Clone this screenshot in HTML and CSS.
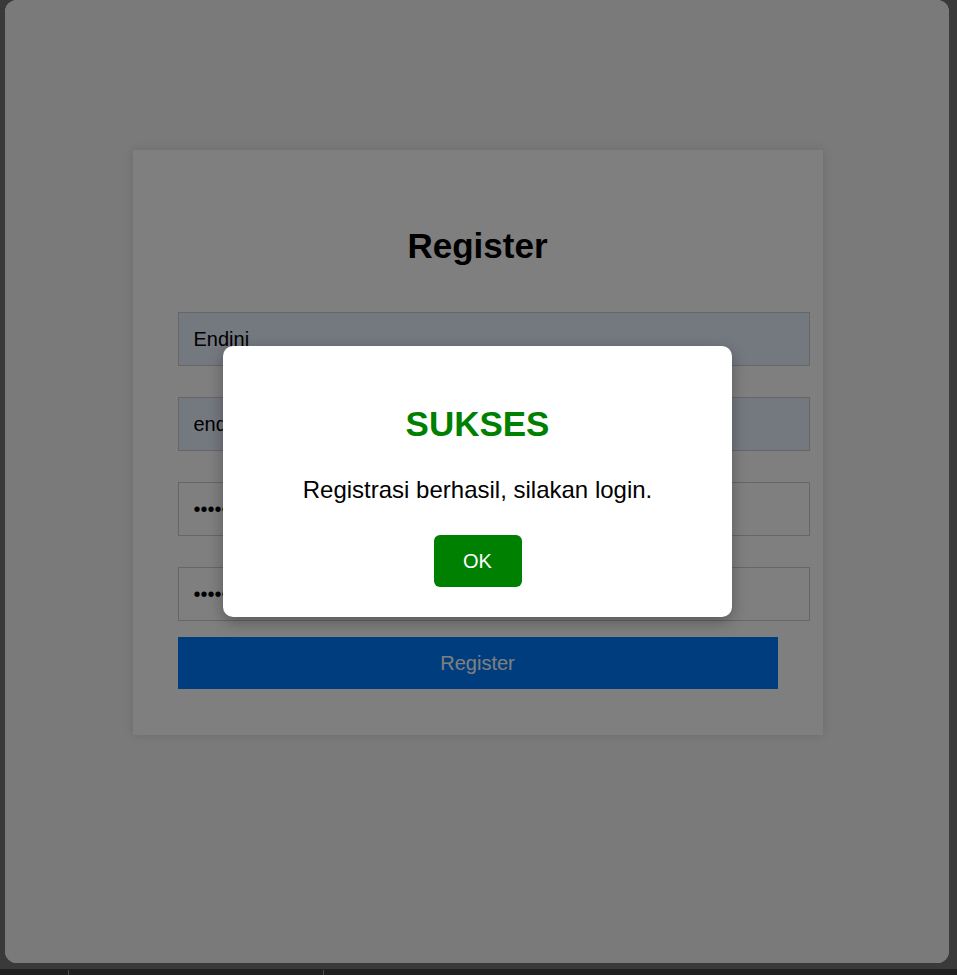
FILE: index.html
```html
<!DOCTYPE html>
<html lang="id">
<head>
<meta charset="utf-8">
<title>Register</title>
<link rel="stylesheet" href="styles.css">
</head>
<body>
<div class="frame">
  <div class="window">
    <div class="page">
      <form class="card">
        <h2 class="title">Register</h2>
        <div class="fields">
          <input class="field autofill" type="text" value="Endini">
          <input class="field autofill" type="email" value="endini@example.com">
          <input class="field" type="password" value="password">
          <input class="field" type="password" value="password">
        </div>
        <button class="submit" type="button">Register</button>
      </form>
    </div>
    <div class="overlay">
      <div class="modal">
        <h2 class="modal-title">SUKSES</h2>
        <p class="modal-text">Registrasi berhasil, silakan login.</p>
        <button class="ok" type="button">OK</button>
      </div>
    </div>
  </div>
</div>
<div class="bottombar"><span class="tick tick-a"></span><span class="tick tick-b"></span></div>
</body>
</html>
```
FILE: styles.css
```css
html, body {
  margin: 0;
  padding: 0;
}
body {
  background: #1f1f1f;
  height: 975px;
  overflow: hidden;
  font-family: "Liberation Sans", Arial, sans-serif;
}
.frame {
  background: #3a3a3a;
  padding: 0 8px 6px 5px;
}
.window {
  position: relative;
  height: 963px;
  border-radius: 12px;
  background: #f4f4f4;
  overflow: hidden;
}
.page {
  padding: 150px 0 0 1px;
}
.card {
  width: 600px;
  margin: 0 auto;
  padding: 45px 45px 46px;
  background: #fff;
  box-shadow: 0 0 10px rgba(0, 0, 0, 0.12);
}
.title {
  margin: 31px 0 46px;
  font-size: 35px;
  line-height: 40px;
  font-weight: bold;
  text-align: center;
  color: #000;
}
.fields {
  display: flex;
  flex-direction: column;
  gap: 31px;
}
.field {
  box-sizing: content-box;
  width: 100%;
  padding: 15px;
  height: 22px;
  border: 1px solid #ccc;
  margin: 0;
  font-family: "Liberation Sans", Arial, sans-serif;
  font-size: 20px;
  line-height: 22px;
  color: #000;
  background: #fff;
  outline: none;
}
.field.autofill {
  background: #e8f0fe;
}
.submit {
  display: block;
  width: 600px;
  height: 52px;
  margin-top: 16px;
  border: none;
  background: #007bff;
  color: #fff;
  font-family: "Liberation Sans", Arial, sans-serif;
  font-size: 20px;
  padding: 0;
}
.overlay {
  position: absolute;
  inset: 0;
  background: rgba(0, 0, 0, 0.5);
  display: flex;
  align-items: center;
  justify-content: center;
  padding-left: 1px;
}
.modal {
  width: 449px;
  padding: 30px;
  background: #fff;
  border-radius: 10px;
  box-shadow: 0 5px 15px rgba(0, 0, 0, 0.3);
  text-align: center;
}
.modal-title {
  margin: 28px 0 32px;
  font-size: 35px;
  line-height: 40px;
  font-weight: bold;
  color: #008000;
}
.modal-text {
  margin: 0 0 31px;
  font-size: 24px;
  line-height: 28px;
  color: #000;
}
.ok {
  width: 88px;
  height: 52px;
  padding: 0;
  border: none;
  border-radius: 6px;
  background: #008000;
  color: #fff;
  font-family: "Liberation Sans", Arial, sans-serif;
  font-size: 20px;
}
.bottombar {
  position: relative;
  height: 6px;
  background: #1f1f1f;
}
.tick {
  position: absolute;
  top: 1px;
  width: 1px;
  height: 5px;
  background: #4a4a4a;
}
.tick-a { left: 68px; }
.tick-b { left: 323px; }
```
